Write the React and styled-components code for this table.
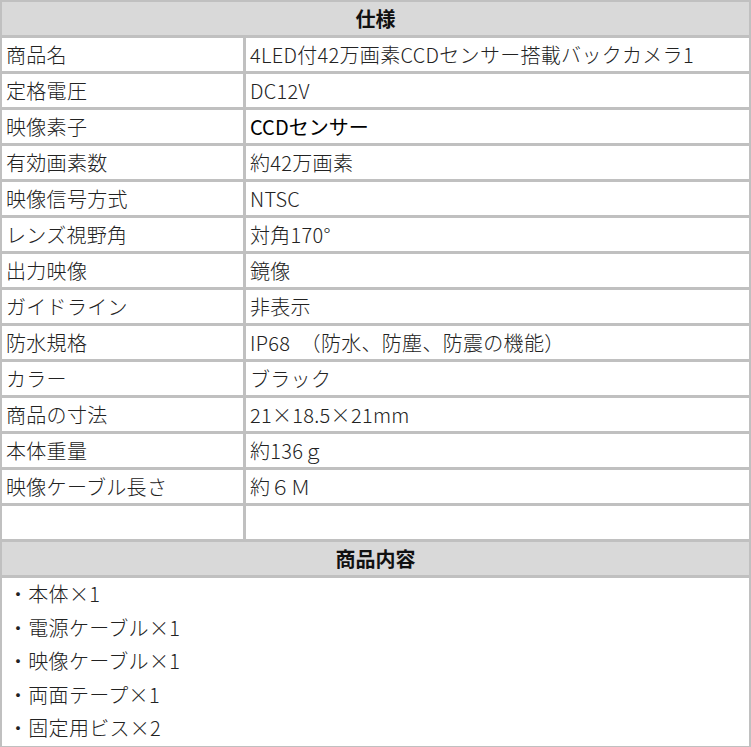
import React from "react";
import styled, { createGlobalStyle } from "styled-components";

const Global = createGlobalStyle`
  html, body { margin: 0; padding: 0; background: #fff; }
  body { font-family: "Noto Sans CJK JP", "Noto Sans", sans-serif; }
`;

const Table = styled.div`
  width: 751px;
  box-sizing: border-box;
  display: grid;
  grid-template-columns: 241px 1fr;
  gap: 3px;
  padding: 2px;
  background: #c0c0c0;
`;

const Head = styled.div`
  grid-column: 1 / -1;
  height: 33px;
  background: #d9d9d9;
  display: flex;
  align-items: center;
  justify-content: center;
  font-size: 20px;
  font-weight: 700;
  color: #111;
`;

const Cell = styled.div`
  height: 33px;
  background: #fff;
  display: flex;
  align-items: center;
  padding: 0 4px;
  font-size: 20px;
  font-weight: 300;
  color: #222;
  white-space: nowrap;
  letter-spacing: 0.3px;
`;

const Bold = styled.span`
  font-weight: 400;
  color: #000;
  letter-spacing: 0;
`;

const List = styled.div`
  grid-column: 1 / -1;
  background: #fff;
  padding: 0 6px;
  margin-top: 0;
`;

const Item = styled.div`
  height: 33.6px;
  line-height: 31px;
  font-size: 20px;
  font-weight: 300;
  color: #222;
  letter-spacing: 0.3px;
`;

const rows = [
  ["商品名", "4LED付42万画素CCDセンサー搭載バックカメラ1"],
  ["定格電圧", "DC12V"],
  ["映像素子", <Bold key="b">CCDセンサー</Bold>],
  ["有効画素数", "約42万画素"],
  ["映像信号方式", "NTSC"],
  ["レンズ視野角", "対角170°"],
  ["出力映像", "鏡像"],
  ["ガイドライン", "非表示"],
  ["防水規格", "IP68\u3000（防水、防塵、防震の機能）"],
  ["カラー", "ブラック"],
  ["商品の寸法", "21×18.5×21mm"],
  ["本体重量", "約136ｇ"],
  ["映像ケーブル長さ", "約６Ｍ"],
  ["", ""],
];

const items = ["・本体×1", "・電源ケーブル×1", "・映像ケーブル×1", "・両面テープ×1", "・固定用ビス×2"];

export default function App() {
  return (
    <>
      <Global />
      <Table>
        <Head>仕様</Head>
        {rows.map(([k, v], i) => (
          <React.Fragment key={i}>
            <Cell>{k}</Cell>
            <Cell>{v}</Cell>
          </React.Fragment>
        ))}
        <Head>商品内容</Head>
        <List>
          {items.map((t) => (
            <Item key={t}>{t}</Item>
          ))}
        </List>
      </Table>
    </>
  );
}
